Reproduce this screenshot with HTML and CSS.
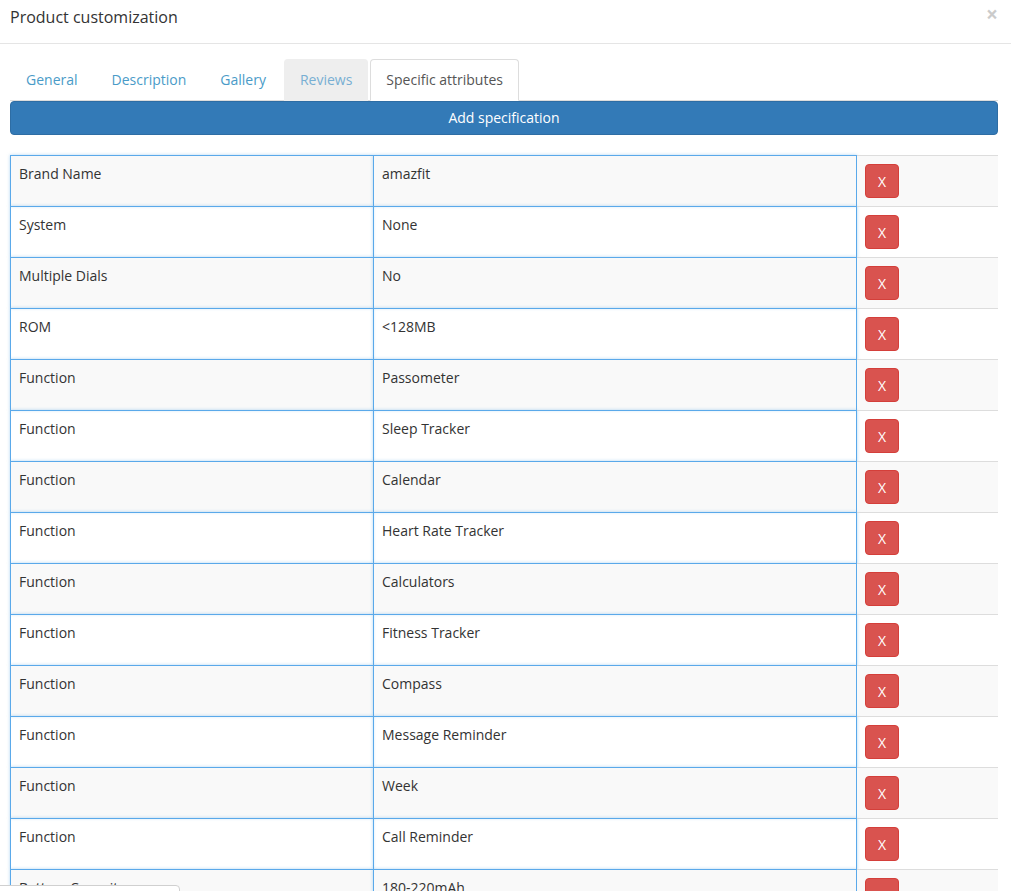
FILE: index.html
```html
<!DOCTYPE html>
<html lang="en">
<head>
    <meta charset="UTF-8">
    <title>Product customization</title>
    <link rel="stylesheet" href="styles.css">
</head>
<body>
    <div class="modal">
        <div class="modal-header">
            <h4 class="modal-title">Product customization</h4>
            <span class="close">&times;</span>
        </div>
        <div class="modal-body">
            <ul class="nav-tabs">
                <li><a href="#">General</a></li>
                <li><a href="#">Description</a></li>
                <li><a href="#">Gallery</a></li>
                <li class="hover"><a href="#">Reviews</a></li>
                <li class="active"><a href="#">Specific attributes</a></li>
            </ul>
            <button class="btn-add" type="button">Add specification</button>

            <table class="spec-table">
                <colgroup>
                    <col class="col-name">
                    <col class="col-value">
                    <col class="col-action">
                </colgroup>
                <tbody>
                    <tr><td class="spec name">Brand Name</td><td class="spec value">amazfit</td><td class="action"><button class="btn-del">X</button></td></tr>
                    <tr><td class="spec name">System</td><td class="spec value">None</td><td class="action"><button class="btn-del">X</button></td></tr>
                    <tr><td class="spec name">Multiple Dials</td><td class="spec value">No</td><td class="action"><button class="btn-del">X</button></td></tr>
                    <tr><td class="spec name">ROM</td><td class="spec value">&lt;128MB</td><td class="action"><button class="btn-del">X</button></td></tr>
                    <tr><td class="spec name">Function</td><td class="spec value">Passometer</td><td class="action"><button class="btn-del">X</button></td></tr>
                    <tr><td class="spec name">Function</td><td class="spec value">Sleep Tracker</td><td class="action"><button class="btn-del">X</button></td></tr>
                    <tr><td class="spec name">Function</td><td class="spec value">Calendar</td><td class="action"><button class="btn-del">X</button></td></tr>
                    <tr><td class="spec name">Function</td><td class="spec value">Heart Rate Tracker</td><td class="action"><button class="btn-del">X</button></td></tr>
                    <tr><td class="spec name">Function</td><td class="spec value">Calculators</td><td class="action"><button class="btn-del">X</button></td></tr>
                    <tr><td class="spec name">Function</td><td class="spec value">Fitness Tracker</td><td class="action"><button class="btn-del">X</button></td></tr>
                    <tr><td class="spec name">Function</td><td class="spec value">Compass</td><td class="action"><button class="btn-del">X</button></td></tr>
                    <tr><td class="spec name">Function</td><td class="spec value">Message Reminder</td><td class="action"><button class="btn-del">X</button></td></tr>
                    <tr><td class="spec name">Function</td><td class="spec value">Week</td><td class="action"><button class="btn-del">X</button></td></tr>
                    <tr><td class="spec name">Function</td><td class="spec value">Call Reminder</td><td class="action"><button class="btn-del">X</button></td></tr>
                    <tr><td class="spec name">Battery Capacity</td><td class="spec value">180-220mAh</td><td class="action"><button class="btn-del">X</button></td></tr>
                </tbody>
            </table>
        </div>
    </div>

    <div class="status-bubble"></div>
</body>
</html>
```

FILE: styles.css
```css
body {
    margin: 0;
    font-family: "Open Sans", Arial, sans-serif;
    font-size: 14px;
    line-height: 20px;
    color: #333;
    background-color: #fff;
    overflow: hidden;
}

.modal-header {
    display: flex;
    justify-content: space-between;
    align-items: flex-start;
    height: 44px;
    box-sizing: border-box;
    padding: 6px 13px 0 10px;
    border-bottom: 1px solid #e5e5e5;
}

.modal-title {
    margin: 0;
    font-size: 16px;
    font-weight: normal;
    line-height: 22px;
    color: #333;
}

.close {
    font-size: 21px;
    font-weight: bold;
    line-height: 16px;
    color: #000;
    opacity: 0.2;
}

.modal-body {
    padding: 15px 13px 0 10px;
}

.nav-tabs {
    display: flex;
    list-style: none;
    margin: 0;
    padding: 0;
    border-bottom: 1px solid #ddd;
}

.nav-tabs li {
    margin-bottom: -1px;
    margin-right: 2px;
}

.nav-tabs a {
    display: block;
    padding: 10px 15px;
    border: 1px solid transparent;
    border-radius: 4px 4px 0 0;
    color: #4a9bc8;
    text-decoration: none;
}

.nav-tabs .hover a {
    background-color: #eee;
    border-color: #eee #eee transparent;
    color: #78afd3;
}

.nav-tabs .active a {
    background-color: #fff;
    border-color: #ddd #ddd transparent;
    color: #555;
}

.btn-add {
    display: block;
    width: 100%;
    padding: 6px 12px;
    font-family: inherit;
    font-size: 14px;
    line-height: 20px;
    color: #fff;
    background-color: #337ab7;
    border: 1px solid #2e6da4;
    border-radius: 4px;
    cursor: pointer;
}

.spec-table {
    width: 100%;
    margin-top: 20px;
    border-collapse: separate;
    border-spacing: 0;
    table-layout: fixed;
}

.col-name {
    width: 363px;
}

.col-value {
    width: 484px;
}

.spec-table tr:nth-child(odd) td {
    background-color: #f9f9f9;
}

.spec-table td {
    vertical-align: top;
    height: 50px;
    box-sizing: border-box;
}

.spec {
    padding: 8px 8px 4px;
    border-top: 1px solid #5aa9ea;
    border-left: 1px solid #5aa9ea;
    box-shadow: 0 0 3px rgba(102, 175, 233, 0.5);
}

.spec.value {
    border-right: 1px solid #5aa9ea;
}

.action {
    padding: 8px;
    border-top: 1px solid #ddd;
}

.btn-del {
    display: block;
    width: 34px;
    height: 34px;
    padding: 0;
    font-family: inherit;
    font-size: 14px;
    color: #fff;
    background-color: #d9534f;
    border: 1px solid #d43f3a;
    border-radius: 4px;
    cursor: pointer;
}

.status-bubble {
    position: fixed;
    left: -1px;
    bottom: -16px;
    width: 179px;
    height: 20px;
    background-color: #fff;
    border: 1px solid #d0d0d0;
    border-radius: 0 4px 0 0;
}
```
